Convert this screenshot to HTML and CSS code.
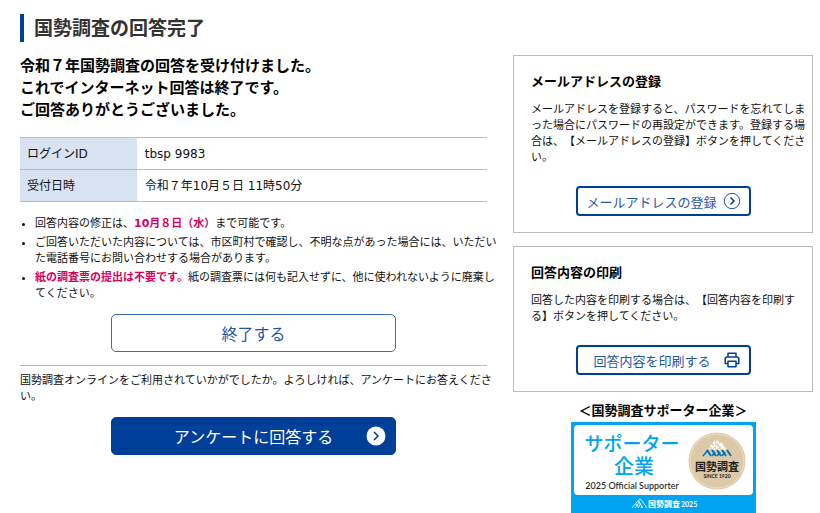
FILE: index.html
```html
<!DOCTYPE html>
<html lang="ja">
<head>
<meta charset="utf-8">
<meta name="viewport" content="width=device-width, initial-scale=1">
<title>国勢調査の回答完了</title>
<link rel="stylesheet" href="styles.css">
</head>
<body>
<div class="page">
  <h1 class="page-title">国勢調査の回答完了</h1>
  <div class="columns">
    <main class="main">
      <p class="lead">令和７年国勢調査の回答を受け付けました。<br>これでインターネット回答は終了です。<br>ご回答ありがとうございました。</p>
      <table class="receipt">
        <tr><th scope="row">ログインID</th><td>tbsp 9983</td></tr>
        <tr><th scope="row">受付日時</th><td>令和７年10月５日 11時50分</td></tr>
      </table>
      <ul class="notes">
        <li>回答内容の修正は、<strong>10月８日（水）</strong>まで可能です。</li>
        <li>ご回答いただいた内容については、市区町村で確認し、不明な点があった場合には、いただいた電話番号にお問い合わせする場合があります。</li>
        <li><strong>紙の調査票の提出は不要です。</strong>紙の調査票には何も記入せずに、他に使われないように廃棄してください。</li>
      </ul>
      <button class="button button-wide" type="button">終了する</button>
      <section class="survey">
        <p class="survey-text">国勢調査オンラインをご利用されていかがでしたか。よろしければ、アンケートにお答えください。</p>
        <button class="button button-wide button-primary" type="button">アンケートに回答する
          <svg class="button-icon" viewBox="0 0 20 20" aria-hidden="true"><circle cx="10" cy="10" r="9.5" fill="#fff"/><path d="M8 6l4 4-4 4" fill="none" stroke="#003f98" stroke-width="1.5"/></svg>
        </button>
      </section>
    </main>
    <aside class="side">
      <section class="card">
        <h2>メールアドレスの登録</h2>
        <p>メールアドレスを登録すると、パスワードを忘れてしまった場合にパスワードの再設定ができます。登録する場合は、【メールアドレスの登録】ボタンを押してください。</p>
        <button class="button button-small" type="button">メールアドレスの登録
          <svg class="small-icon" viewBox="0 0 18 18" aria-hidden="true"><circle cx="9" cy="9" r="7.7" fill="none" stroke="#1f56a5" stroke-width="1"/><path d="M7.5 5.5L11 9l-3.5 3.5" fill="none" stroke="#003f98" stroke-width="1.5"/></svg>
        </button>
      </section>
      <section class="card">
        <h2>回答内容の印刷</h2>
        <p>回答した内容を印刷する場合は、【回答内容を印刷する】ボタンを押してください。</p>
        <button class="button button-small button-print" type="button">回答内容を印刷する
          <svg class="small-icon" viewBox="0 0 18 18" aria-hidden="true"><g fill="none" stroke="#003f98" stroke-width="1.5" stroke-linejoin="round"><path d="M5 6V2.200h8V6M5 12.500H2.200V8q0-2 2-2h9.600q2 0 2 2v4.500H13"/><path d="M5 10.300h8v5.500H5z"/></g></svg>
        </button>
      </section>
      <figure class="supporter">
        <figcaption>＜国勢調査サポーター企業＞</figcaption>
        <svg class="badge" viewBox="0 0 185 91" role="img" aria-label="国勢調査2025 サポーター企業">
          <rect width="185" height="91" fill="#00a4f0"/>
          <rect x="3" y="3" width="179" height="70" rx="4" fill="#fff"/>
          <g fill="#00a4f0" font-weight="500" text-anchor="middle">
            <text x="61" y="29" font-size="19">サポーター</text>
            <text x="63" y="52" font-size="20">企業</text>
          </g>
          <text class="latin" x="61" y="67" font-size="9" font-weight="500" fill="#222" text-anchor="middle">2025 Official Supporter</text>
          <circle cx="146" cy="39" r="28.5" fill="#ddc9a7"/>
          <circle cx="146" cy="39" r="27" fill="none" stroke="#f1e6d2" stroke-width=".7"/>
          <g fill="none" stroke-width="1.4">
            <path stroke="#fff" stroke-dasharray="3.5 1" d="M144 19l-6 8M147 19l-6 8M150 21l-5 7M152 24l-3 4M142 20l6 8M146 19l7 9M150 21l5 7M140 23l4 5"/>
            <path stroke="#0072bc" stroke-width="2" d="M136 28l4 6M141 28l4 6M146 28l4 6M151 28l4 6M156 28l4 6"/>
            <path stroke="#0072bc" stroke-width="1.5" d="M137 28l-5 6M144 30l-3 4M149 30l-3 4M154 30l-3 4"/>
          </g>
          <g fill="#231f20" font-weight="700" text-anchor="middle">
            <text x="146" y="49" font-size="11">国勢調査</text>
            <text class="latin" x="146" y="56" font-size="5">SINCE 1920</text>
          </g>
          <path d="M61 86l7-8.500q1-1 2 0l6 8.500M64 86l5-7M67 86l3-5M67 79l5 7M65 82l3 4M70 86l1-2" fill="none" stroke="#fff" stroke-width=".8"/>
          <text x="77" y="85" font-size="8" font-weight="700" fill="#fff">国勢調査</text>
          <text class="latin" x="110" y="85" font-size="7" font-weight="700" fill="#fff">2025</text>
        </svg>
      </figure>
    </aside>
  </div>
</div>
</body>
</html>
```

FILE: styles.css
```css
* { box-sizing: border-box; }

body {
  margin: 0;
  background: #fff;
  color: #111;
  font-family: "DejaVu Sans", "Noto Sans CJK JP", sans-serif;
  font-size: 11px;
  line-height: 16px;
  text-spacing-trim: space-all;
}

h1, h2, p, figure { margin: 0; }

.page { padding: 14px 7px 0 20px; }

.page-title {
  padding-left: 10px;
  border-left: 4px solid #003f98;
  color: #333;
  font-size: 19px;
  line-height: 28px;
}

.columns {
  display: grid;
  grid-template-columns: minmax(0, 1fr) 300px;
  gap: 26px;
  align-items: start;
  padding-top: 13px;
}

.lead {
  color: #000;
  font-size: 15px;
  font-weight: 700;
  line-height: 22px;
}

.receipt {
  width: 100%;
  margin-top: 16px;
  border-collapse: collapse;
  font-size: 12px;
}

.receipt th,
.receipt td {
  height: 32px;
  padding: 0 8px;
  border-top: 1px solid #bbb;
  border-bottom: 1px solid #bbb;
  font-weight: 400;
  text-align: left;
}

.receipt th {
  width: 25%;
  padding-left: 7px;
  background: #d9e2f1;
}

/* The notes run slightly into the column gap so that lines stay full. */
.notes {
  margin: 14px -12px 12px 0;
  padding-left: 15px;
}

.notes li + li { margin-top: 3px; }

.notes strong { color: #d7005f; }

.button {
  display: flex;
  align-items: center;
  justify-content: center;
  margin: 0 auto;
  padding: 0;
  border: 1px solid #3a6ab0;
  border-radius: 5px;
  background: #fff;
  color: #1f56a5;
  font-family: inherit;
  cursor: pointer;
}

.button-wide {
  position: relative;
  width: 61%;
  height: 38px;
  font-size: 16px;
}

.button-primary {
  border-color: #003f98;
  background: #003f98;
  color: #fff;
}

.button-icon {
  position: absolute;
  right: 9px;
  width: 20px;
  height: 20px;
}

.survey {
  margin-top: 13px;
  padding-top: 7px;
  border-top: 1px solid #bbb;
}

.survey-text { margin: 0 -12px 12px 0; }

.card {
  padding: 16px 17px;
  border: 1px solid #bbb;
}

.card + .card { margin-top: 13px; }

.card h2 {
  margin-bottom: 10px;
  color: #000;
  font-size: 13px;
  line-height: 20px;
}

.card p { margin: 0 -12px 20px 0; }

.button-small {
  justify-content: flex-end;
  gap: 6px;
  width: 175px;
  height: 30px;
  padding-right: 8px;
  border: 2px solid #003f98;
  border-radius: 4px;
  font-size: 13px;
}

.button-print { gap: 12px; }

.small-icon {
  width: 18px;
  height: 18px;
}

.supporter {
  margin-top: 11px;
  text-align: center;
}

.supporter figcaption {
  margin-bottom: 3px;
  color: #000;
  font-size: 13px;
  font-weight: 700;
}

.badge {
  display: block;
  width: 185px;
  margin: 0 auto;
}

.latin { font-family: Lato, sans-serif; }
```
